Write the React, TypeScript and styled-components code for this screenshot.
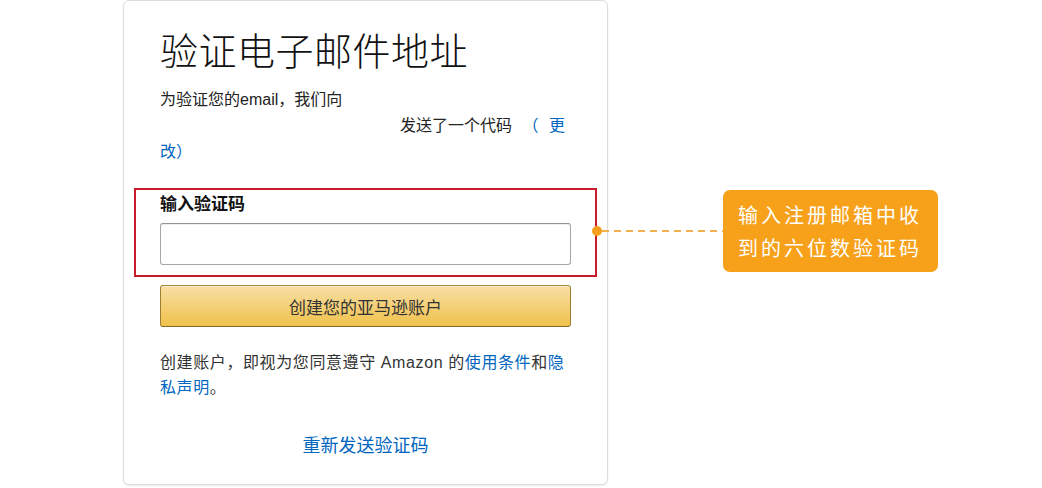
import { createGlobalStyle, styled } from "styled-components";

const GlobalStyle = createGlobalStyle`
  html, body {
    margin: 0;
    padding: 0;
    background: #fff;
    overflow: hidden;
  }
  body {
    font-family: "Liberation Sans", "Noto Sans CJK SC", sans-serif;
    color: #111;
  }
`;

const Page = styled.div`
  width: 1042px;
  height: 488px;
  display: flex;
  align-items: flex-start;
  padding-left: 123px;
  box-sizing: border-box;
`;

const Card = styled.div`
  width: 485px;
  box-sizing: border-box;
  border: 1px solid #dddddd;
  border-radius: 6px;
  box-shadow: 0 1px 2px rgba(0, 0, 0, 0.08);
  padding: 28px 36px 26px;
  background: #fff;
`;

const Title = styled.h1`
  margin: 0;
  font-size: 38px;
  line-height: 46px;
  font-weight: 300;
  color: #111;
  letter-spacing: 0.5px;
`;

const Notice = styled.div`
  margin-top: 12px;
  font-size: 16px;
  line-height: 26px;
  color: #222;
`;

const Line = styled.div<{ $indent?: number }>`
  padding-left: ${(p) => p.$indent ?? 0}px;
  word-spacing: 6px;
`;

const Link = styled.a`
  color: #0066c0;
  text-decoration: none;
  cursor: pointer;
`;

// 注释框：红框包住输入区域，右边挂着橙色说明
const Highlight = styled.div`
  position: relative;
  margin: 23px -26px 0;
  padding: 5px 24px 10px;
  border: 2px solid #c91c2a;
`;

const Label = styled.label`
  display: block;
  font-size: 17px;
  line-height: 20px;
  font-weight: 700;
  color: #111;
`;

const Input = styled.input`
  display: block;
  width: 100%;
  height: 42px;
  margin-top: 8px;
  box-sizing: border-box;
  border: 1px solid #a6a6a6;
  border-top-color: #949494;
  border-radius: 3px;
  box-shadow: 0 1px 0 rgba(255, 255, 255, 0.5), 0 1px 0 rgba(0, 0, 0, 0.07) inset;
  outline: none;
  padding: 0 8px;
  font-size: 16px;
`;

const Annotation = styled.div`
  position: absolute;
  left: calc(100% - 3px);
  top: 50%;
  transform: translateY(calc(-50% - 2px));
  display: flex;
  align-items: center;
`;

const Dot = styled.span`
  width: 10px;
  height: 10px;
  border-radius: 50%;
  background: #f5a01c;
  flex-shrink: 0;
`;

const Dashes = styled.span`
  width: 121px;
  height: 2px;
  background: repeating-linear-gradient(
    to right,
    #f2b04e 0 7px,
    transparent 7px 12px
  );
`;

const Callout = styled.div`
  width: 215px;
  height: 82px;
  box-sizing: border-box;
  padding: 8px 15px;
  border-radius: 7px;
  background: #f7a11a;
  color: #fff;
  font-size: 20px;
  line-height: 33px;
  letter-spacing: 3px;
  font-family: "Noto Sans CJK SC", sans-serif;
`;

const SubmitButton = styled.button`
  display: block;
  width: 100%;
  height: 42px;
  margin-top: 8px;
  border: 1px solid;
  border-color: #a88734 #9c7e31 #846a29;
  border-radius: 3px;
  background: linear-gradient(to bottom, #f7dfa5, #f0c14b);
  box-shadow: 0 1px 0 rgba(255, 255, 255, 0.4) inset;
  font-family: "Liberation Sans", "Noto Sans CJK SC", sans-serif;
  font-size: 17px;
  color: #333;
  cursor: pointer;
`;

const Terms = styled.p`
  margin: 23px 0 0;
  font-size: 16px;
  line-height: 25px;
  letter-spacing: 0.6px;
  color: #333;
`;

const Resend = styled.div`
  margin-top: 34px;
  text-align: center;
  font-size: 18px;
  line-height: 24px;
`;

export default function App() {
  return (
    <>
      <GlobalStyle />
      <Page>
        <Card>
          <Title>验证电子邮件地址</Title>
          <Notice>
            <Line>为验证您的email，我们向</Line>
            <Line $indent={240}>
              发送了一个代码 <Link>（ 更</Link>
            </Line>
            <Line>
              <Link>改）</Link>
            </Line>
          </Notice>
          <Highlight>
            <Label htmlFor="code">输入验证码</Label>
            <Input id="code" />
            <Annotation>
              <Dot />
              <Dashes />
              <Callout>
                输入注册邮箱中收
                <br />
                到的六位数验证码
              </Callout>
            </Annotation>
          </Highlight>
          <SubmitButton>创建您的亚马逊账户</SubmitButton>
          <Terms>
            创建账户，即视为您同意遵守 Amazon 的<Link>使用条件</Link>和
            <Link>隐私声明</Link>。
          </Terms>
          <Resend>
            <Link>重新发送验证码</Link>
          </Resend>
        </Card>
      </Page>
    </>
  );
}
